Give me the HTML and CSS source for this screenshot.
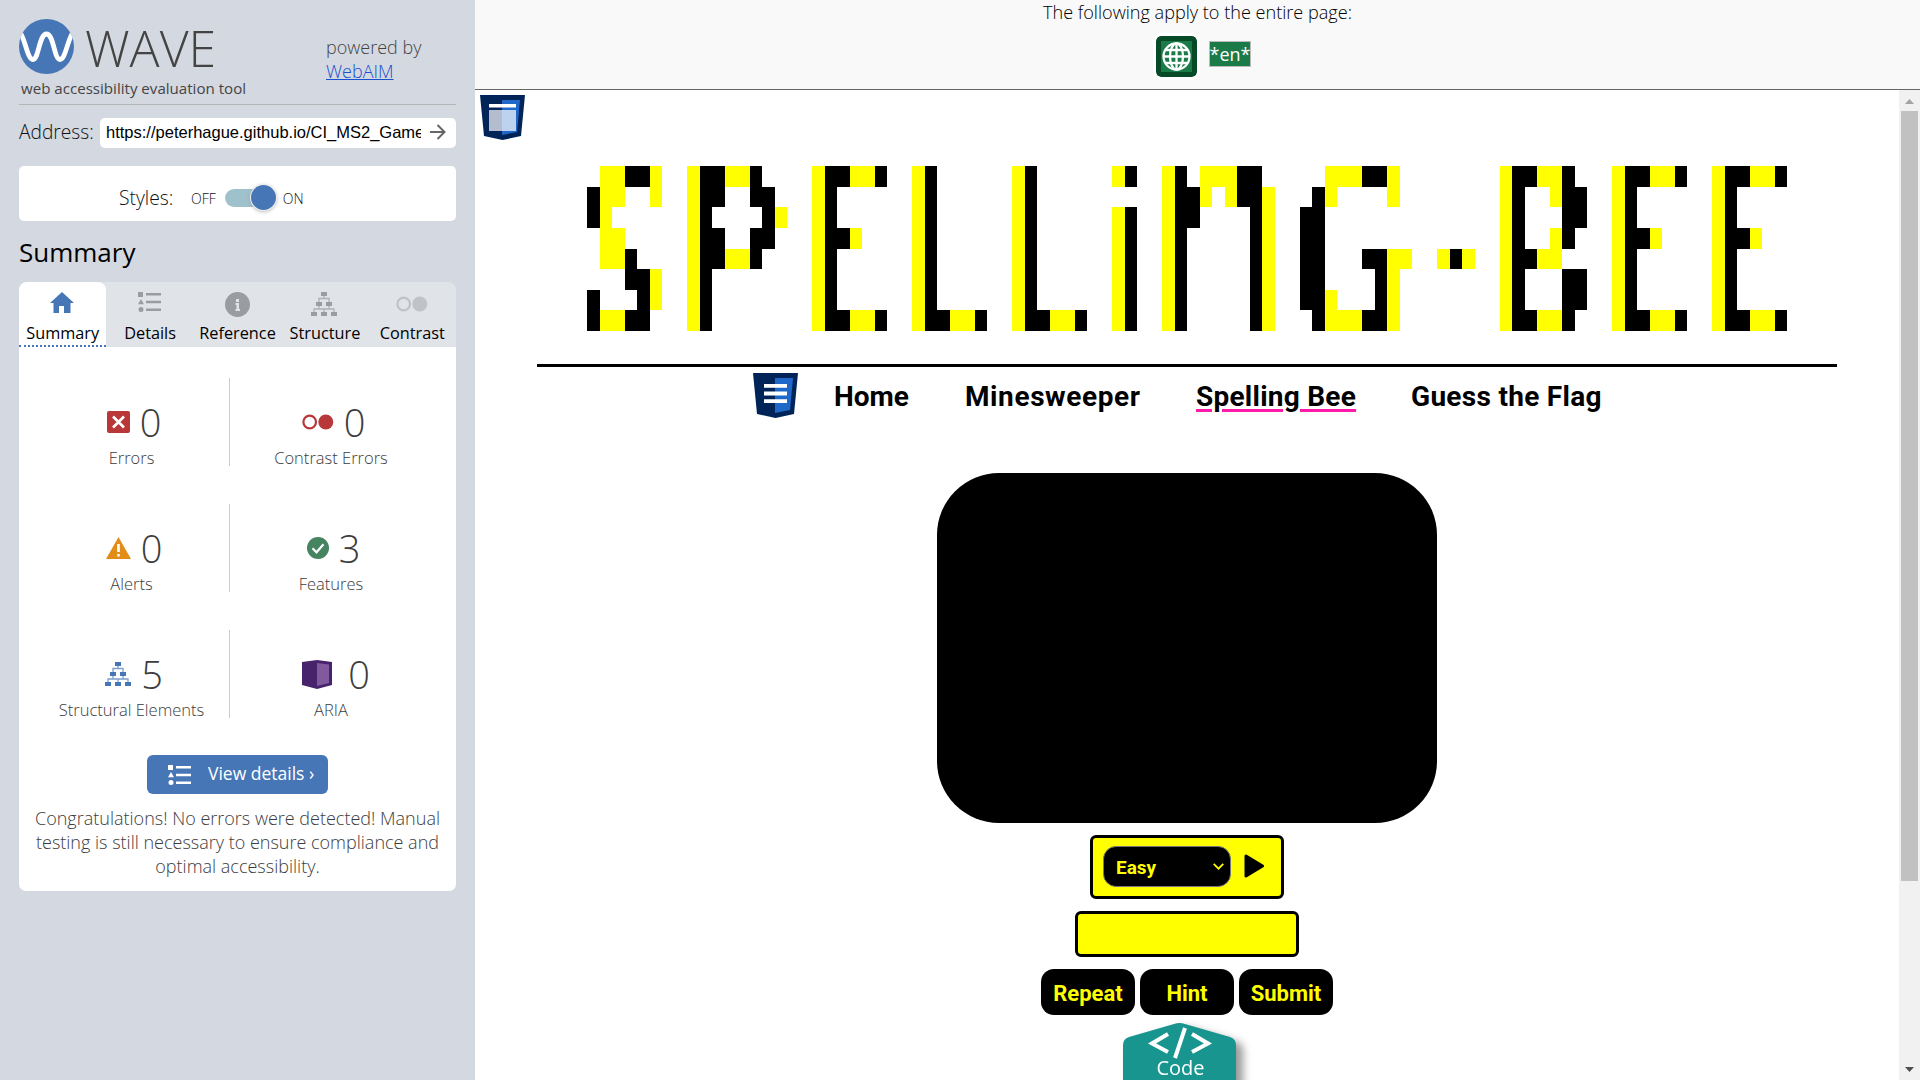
FILE: index.html
```html
<!DOCTYPE html>
<html lang="en">
<head>
<meta charset="utf-8">
<title>WAVE Report</title>
<link rel="stylesheet" href="styles.css">
</head>
<body>
<svg width="0" height="0" class="defs">
  <symbol id="list" viewBox="0 0 23 20"><path fill="currentColor" d="M0 0h5v5H0zM3 7l3 5.300H0zM8 1h15v2.600H8zM8 8.700h15v2.600H8zM8 16.400h15V19H8z"/><circle cx="3" cy="17.500" r="2.500" fill="currentColor"/></symbol>
  <symbol id="tree" viewBox="0 0 26 24"><path fill="currentColor" d="M10 0h6v4h-6zM5 10h6v4H5zM15 10h6v4h-6zM0 20h6v4H0zM10 20h6v4h-6zM20 20h6v4h-6z"/><path d="M13 4v3M8 10V6.500h10V10M8 14v3M18 14v3M3 20v-3h20v3M13 17v3" fill="none" stroke="currentColor" stroke-opacity=".7" stroke-width="1.300"/></symbol>
  <symbol id="rings" viewBox="0 0 32 16"><circle cx="7.700" cy="8" r="6.300" fill="none" stroke="currentColor" stroke-width="2.200"/><circle cx="23.800" cy="8" r="7.500" fill="currentColor"/></symbol>
  <symbol id="shield" viewBox="0 0 45 45"><path d="M0 0h45l-4 41-18.500 4L4 41z" fill="#002458"/><path d="M22 5h18l-3 32-15 3z" fill="#1f68c9"/></symbol>
</svg>
<div class="app">
  <aside class="sidebar">
    <header class="brand">
      <div>
        <div class="logo">
          <svg width="55" height="55" viewBox="0 0 55 55"><defs><clipPath id="disc"><circle cx="27.500" cy="27.500" r="27.500"/></clipPath></defs><g clip-path="url(#disc)"><rect width="55" height="55" fill="#4776b6"/><path d="M-1 11C6 16 8 41 14 40.500S20 15 27.500 15 35 40.500 41 40.500 49 16 56 11" fill="none" stroke="#fff" stroke-width="4.800"/></g></svg>
          <span>WAVE</span>
        </div>
        <p class="tagline">web accessibility evaluation tool</p>
      </div>
      <p class="powered">powered by<br><a>WebAIM</a></p>
    </header>
    <div class="address">
      <span>Address:</span>
      <div class="url"><span>https://peterhague.github.io/CI_MS2_GamesZone</span>
        <svg width="16" height="16" viewBox="0 0 16 16"><path d="M0 8h14M7.500 1l7 7-7 7" fill="none" stroke="#666" stroke-width="2"/></svg></div>
    </div>
    <div class="styles-card"><span class="styles-label">Styles:</span><span class="state">OFF</span><span class="toggle"><i></i></span><span class="state">ON</span></div>
    <h1>Summary</h1>
    <nav class="tabs">
      <div class="tab active"><svg width="24" height="21" viewBox="0 0 24 21"><path d="M12 0L0 11h3.500v10H9v-7h5v7h6.500V11H24z" fill="#4776b6"/></svg><span>Summary</span></div>
      <div class="tab"><svg width="23" height="20"><use href="#list"/></svg><span>Details</span></div>
      <div class="tab"><svg width="25" height="25" viewBox="0 0 25 25"><circle cx="12.500" cy="12.500" r="12.500" fill="#999d9f"/><path d="M11 7h3v3h-3zM10.500 11H14v6h1v2h-4.500v-2h1v-4h-1z" fill="#e0e3e8"/></svg><span>Reference</span></div>
      <div class="tab"><svg width="26" height="24"><use href="#tree"/></svg><span>Structure</span></div>
      <div class="tab faint"><svg width="32" height="16"><use href="#rings"/></svg><span>Contrast</span></div>
    </nav>
    <section class="panel">
      <div class="stats">
        <div class="stat"><div class="count"><svg width="23" height="22" viewBox="0 0 23 22"><rect width="23" height="22" rx="2" fill="#b83739"/><path d="M6 5.500l11 11M17 5.500l-11 11" stroke="#fff" stroke-width="2.600"/></svg>0</div><span>Errors</span></div>
        <div class="stat"><div class="count red"><svg width="32" height="16"><use href="#rings"/></svg>0</div><span>Contrast Errors</span></div>
        <div class="stat"><div class="count"><svg width="25" height="22" viewBox="0 0 25 22"><path d="M12.500 0L25 22H0z" fill="#e28d17"/><path d="M11.200 7h2.600v8h-2.600zM11.200 17h2.600v2.500h-2.600z" fill="#fff"/></svg>0</div><span>Alerts</span></div>
        <div class="stat"><div class="count"><svg width="22" height="22" viewBox="0 0 22 22"><circle cx="11" cy="11" r="11" fill="#46835f"/><path d="M5.500 11.300l4 4 7-8" fill="none" stroke="#fff" stroke-width="2.200"/></svg>3</div><span>Features</span></div>
        <div class="stat"><div class="count blue"><svg width="26" height="24"><use href="#tree"/></svg>5</div><span>Structural Elements</span></div>
        <div class="stat"><div class="count aria"><svg width="30" height="29" viewBox="0 0 30 29"><path d="M0 2l15-2 15 2v23l-15 4-15-4z" fill="#47236c"/><path d="M15 3l12 1.500V23l-12 3z" fill="#805a9c"/></svg>0</div><span>ARIA</span></div>
      </div>
      <div class="details-btn"><svg width="23" height="20"><use href="#list"/></svg><span>View details ›</span></div>
      <p class="message">Congratulations! No errors were detected! Manual<br>testing is still necessary to ensure compliance and<br>optimal accessibility.</p>
    </section>
  </aside>
  <main class="main">
    <div class="page-notes">
      <p>The following apply to the entire page:</p>
      <div class="note-icons">
        <svg class="globe" width="41" height="41" viewBox="0 0 41 41"><rect width="41" height="41" rx="5" fill="#064a27"/><rect x="5" y="5" width="31" height="31" fill="#1a7a48"/><g fill="none" stroke="#fff" stroke-width="2.300"><circle cx="20.500" cy="20.500" r="13"/><ellipse cx="20.500" cy="20.500" rx="6.500" ry="13"/><path d="M20.500 7v27M7 20.500h27M9.500 14h22M9.500 27h22"/></g></svg>
        <span class="lang">*en*</span>
      </div>
    </div>
    <div class="viewport">
      <div class="page">
        <svg class="header-icon" width="45" height="45"><use href="#shield"/><path d="M9 9h27v3.500H9z" fill="#fff"/><path d="M9 15h27v21H9z" fill="#fff" fill-opacity=".7"/></svg>
        <div class="mosaic" id="mosaic"></div>
        <hr>
        <nav class="site-nav">
          <svg width="45" height="45"><use href="#shield"/><path d="M11 11h23v3.800H11zM11 18.600h23v3.800H11zM11 26.200h23V30H11z" fill="#fff"/></svg>
          <a class="home">Home</a><a class="mines">Minesweeper</a><a class="bee"><u>Spelling Bee</u></a><a class="flag">Guess the Flag</a>
        </nav>
        <div class="screen"></div>
        <div class="controls">
          <div class="level"><span>Easy</span><svg width="11" height="7" viewBox="0 0 11 7"><path d="M.7.8l4.800 4.900L10.300.8" fill="none" stroke="#ff0" stroke-width="1.700"/></svg></div>
          <svg width="20" height="24" viewBox="0 0 20 24"><path d="M2 2v20l16.500-10z" stroke="#000" stroke-width="3" stroke-linejoin="round"/></svg>
        </div>
        <div class="answer"></div>
        <div class="buttons"><span>Repeat</span><span>Hint</span><span>Submit</span></div>
      </div>
      <div class="scrollbar"><svg width="9" height="5"><path d="M0 5l4.500-5L9 5z" fill="#a3a3a3"/></svg><i></i><svg width="9" height="5"><path d="M0 0h9L4.500 5z" fill="#505050"/></svg></div>
    </div>
    <div class="code-tab">
      <svg width="113" height="70" viewBox="0 0 113 70"><path d="M0 70V22q0-6 6-8L51 1q5.500-1.800 11 0l45 13q6 2 6 8v48z" fill="#18958f"/><path d="M45 11L29 20.500 45 29M69 11l16 9.500L69 29M62 5L52 35" fill="none" stroke="#fff" stroke-width="4"/></svg>
      <span>Code</span>
    </div>
  </main>
</div>
<script src="mosaic.js"></script>
</body>
</html>
```
FILE: styles.css
```css
* { box-sizing: border-box; }
body { margin: 0; font-family: "Open Sans", sans-serif; font-weight: 350; overflow: hidden; }
p, h1 { margin: 0; }
svg { display: block; flex: none; }
.defs { position: absolute; }
.app { display: flex; width: 1920px; height: 1080px; }

.sidebar { width: 475px; padding: 0 19px; background: #d4d8e0; color: #111; }
.brand { display: flex; justify-content: space-between; height: 105px; padding-top: 19px; border-bottom: 1px solid #b1b6b6; color: #444; }
.logo { display: flex; gap: 11px; height: 55px; font-size: 50px; line-height: 59px; font-weight: 300; }
.tagline { padding-left: 2px; font-size: 15.100px; line-height: 28px; font-weight: 390; }
.powered { width: 130px; padding-top: 16px; font-size: 18px; line-height: 24px; white-space: nowrap; }
.powered a { color: #1a4fd0; text-decoration: underline; }
.address { display: flex; justify-content: space-between; margin-top: 13px; height: 30px; font-size: 19.200px; line-height: 27px; }
.url { display: flex; align-items: center; justify-content: space-between; width: 356px; padding: 0 10px 2px 6px; background: #fff; border-radius: 5px; font: 400 16.5px/30px "Liberation Sans", sans-serif; color: #000; }
.url span { width: 315px; overflow: hidden; white-space: nowrap; }
.styles-card { display: flex; align-items: center; height: 55px; margin-top: 18px; padding: 8px 0 0 100px; background: #fff; border-radius: 5px; }
.styles-label { width: 72px; font-size: 19.300px; }
.state { font-size: 14px; padding-top: 2px; }
.toggle { width: 51px; height: 18px; margin: 0 7px 0 9px; padding-left: 26px; border-radius: 9px; background: linear-gradient(90deg, #9fc1cb 40px, transparent 40px); }
.toggle i { display: block; width: 25px; height: 25px; margin-top: -4px; border-radius: 50%; background: #4776b6; box-shadow: 0 0 0 1px #eee, 0 1px 4px #999; }
.sidebar h1 { height: 61px; padding-top: 14px; font-size: 26px; line-height: 34px; font-weight: 370; color: #000; }
.tabs { display: flex; height: 65px; background: #e0e3e8; border-radius: 8px 8px 0 0; color: #999d9f; }
.tab { display: flex; flex: 1; flex-direction: column; align-items: center; padding-top: 10px; border-radius: 8px 8px 0 0; }
.tab svg { margin-left: -1px; }
.tab span { margin-top: auto; padding-bottom: 2px; font-size: 16.300px; line-height: 24px; font-weight: 380; color: #000; }
.tab.active { background: #fff; border-bottom: 2px dotted #4776b6; }
.tab.active span { padding-bottom: 0; }
.tab.faint { color: #bfc2c6; }
.tab.faint svg { margin-top: 4px; }
.panel { height: 544px; padding-top: 31px; background: #fff; border-radius: 0 0 7px 7px; color: #3c3c3c; }
.stats { display: grid; grid-template-columns: 211px 226px; grid-auto-rows: 88px; row-gap: 38px; }
.stat { display: flex; flex-direction: column; align-items: center; padding-top: 20px; font-size: 16.500px; line-height: 24px; }
.stat:nth-child(odd) { border-right: 1px solid #ccc; padding-left: 15px; }
.stat:nth-child(even) { padding-right: 24px; }
.count { display: flex; align-items: center; gap: 10px; height: 49px; padding-left: 5px; font-size: 38px; line-height: 48px; }
.red svg { color: #b83739; }
.blue svg { color: #4776b6; }
.aria { gap: 16px; padding-left: 10px; }
.details-btn { display: flex; align-items: center; width: 181px; height: 39px; margin: 37px auto 0 128px; padding-left: 21px; gap: 17px; background: #4776b6; border-radius: 6px; color: #fff; font-size: 17.500px; font-weight: 400; line-height: 37px; white-space: nowrap; }
.details-btn span { padding-bottom: 2px; }
.message { margin-top: 12px; text-align: center; font-size: 18px; line-height: 24px; white-space: nowrap; }

.main { position: relative; width: 1445px; height: 1080px; overflow: hidden; background: #fff; }
.page-notes { height: 90px; border-bottom: 1px solid #666; background: #f9f9f9; text-align: center; font-size: 18.100px; line-height: 24px; }
.note-icons { display: flex; justify-content: center; gap: 12px; height: 53px; padding: 12px 0 0 11px; }
.globe { border-radius: 5px; box-shadow: 0 0 0 3px #fff; }
.lang { height: 26px; margin-top: 5px; width: 42px; border: 1px solid #bbb; background: #1a7a48; color: #fff; font-size: 18px; line-height: 24px; font-weight: 400; }
.viewport { display: flex; height: 990px; }
.page { width: 1424px; padding-top: 5px; }
.header-icon { margin-left: 5px; }
.mosaic { display: grid; grid-template: repeat(8, 20.625px) / repeat(96, 12.500px); width: 1200px; margin: 26px 0 0 112.250px; }
.mosaic .y { background: #ff0; }
.mosaic .b { background: #000; }
.page hr { width: 1300px; height: 3px; margin: 33px auto 6px; border: 0; background: #000; }
.site-nav { display: flex; height: 45px; padding-left: 278px; font: 700 28px/47px Roboto, sans-serif; white-space: nowrap; }
.site-nav a { flex: none; }
.home { width: 131px; margin-left: 36px; }
.mines { width: 231px; letter-spacing: .6px; }
.bee { width: 215px; letter-spacing: .25px; }
.bee u { text-decoration: underline 3px #ff1aa8; text-underline-offset: 3px; }
.flag { letter-spacing: .3px; }
.screen { width: 500px; height: 350px; margin: 55px auto 0; border-radius: 62px; background: #000; }
.controls { display: flex; gap: 13px; width: 194px; height: 64px; margin: 12px auto 0; padding: 8px 10px; border: 3px solid #000; border-radius: 6px; background: #ff0; }
.controls > svg { margin-top: 8px; }
.level { display: flex; align-items: center; justify-content: space-between; width: 128px; height: 41px; padding: 0 6px 0 12px; border: 1px solid #777; border-radius: 13px; background: #000; color: #ff0; font: 700 19px/40px Roboto, sans-serif; }
.level span { padding-top: 2px; }
.answer { width: 224px; height: 46px; margin: 12px auto 0; border: 3px solid #000; border-radius: 6px; background: #ff0; }
.buttons { display: flex; justify-content: center; gap: 5px; margin-top: 12px; }
.buttons span { width: 94px; height: 46px; border-radius: 13px; background: #000; color: #ff0; text-align: center; font: 700 22px/49px Roboto, sans-serif; }
.scrollbar { display: flex; flex-direction: column; align-items: center; width: 21px; padding: 9px 0 8px; background: #f1f1f1; }
.scrollbar i { width: 17px; height: 770px; margin: 7px 0 auto; background: #c1c1c1; }
.code-tab { position: absolute; left: 648px; top: 1023px; width: 113px; filter: drop-shadow(7px 5px 4px #999); }
.code-tab span { position: absolute; left: 0; top: 31px; width: 115px; text-align: center; color: #fff; font-size: 20px; line-height: 28px; font-weight: 400; }
```
FILE: mosaic.js
```js
// Pixel tiles of the banner, one list of eight rows per figure.
// y = yellow tile, b = black tile, . = empty
const bar = "ybbyyb", stem = "yb....";
const E = [bar, stem, stem, "ybby..", stem, stem, stem, bar];
const L = [stem, stem, stem, stem, stem, stem, stem, bar];
const figures = [
  [".yybby", "byy..y", "by....", ".yy...", ".yyb..", "...bby", "b...by", "byybb."],
  ["ybbyyb..", "ybb..bb.", "yb....by", "ybb..bb.", "ybbyyb..", "yb......", "yb......", "yb......"],
  E, L, L,
  ["yb", "..", "yb", "yb", "yb", "yb", "yb", "yb"],
  ["yb.yyybb.", "ybby.ybby", "ybb....by", "yb.....by", "yb.....by", "yb.....by", "yb.....by", "yb.....by"],
  ["..yyybby.", ".by....y.", "bb.......", "bb.......", "bb...bbyy", "bb....by.", "bby...by.", ".byyybby."],
  ["...", "...", "...", "...", "yby", "...", "...", "..."],
  ["ybbyyb.", "yb..ybb", "yb...bb", "yb..yb.", "ybbyy..", "yb...bb", "yb...bb", "ybbyyb."],
  E, E
];
const mosaic = document.getElementById("mosaic");
for (let row = 0; row < 8; row++) {
  for (const tile of figures.map(f => f[row]).join("..")) {
    const cell = document.createElement("i");
    if (tile !== ".") cell.className = tile;
    mosaic.append(cell);
  }
}
```
